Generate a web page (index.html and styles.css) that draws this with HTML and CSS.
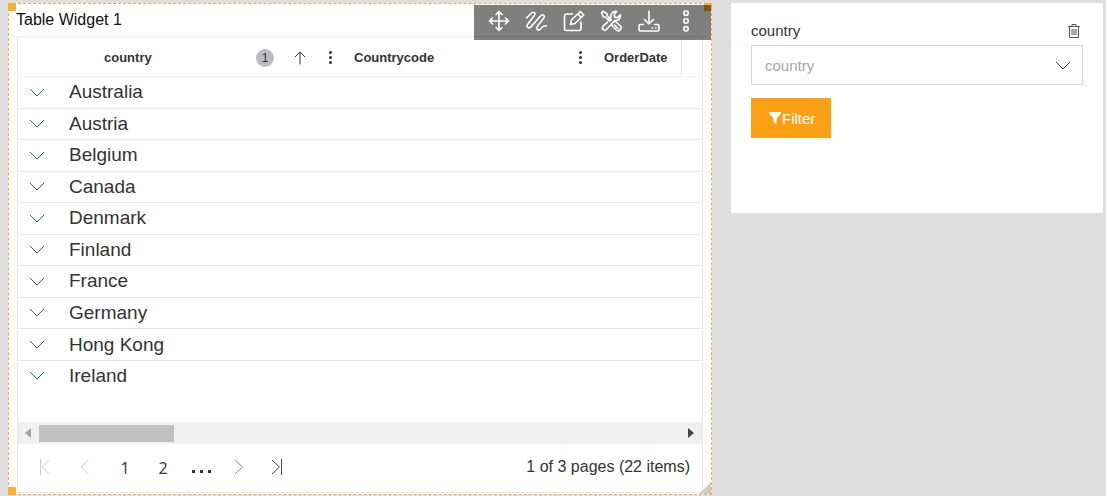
FILE: index.html
```html
<!DOCTYPE html>
<html lang="en">
<head>
<meta charset="utf-8">
<title>Table Widget 1</title>
<link rel="stylesheet" href="styles.css">
</head>
<body>
<main class="dashboard">
  <section class="widget">
    <span class="handle handle-tl"></span>
    <span class="handle handle-tr"></span>
    <span class="handle handle-bl"></span>
    <span class="resize-corner"></span>
    <h1 class="widget-title">Table Widget 1</h1>
    <div class="toolbar">
      <button class="tool" aria-label="Move"><svg viewBox="0 0 22 22"><path d="M11 1.500v19M1.500 11h19M8 4.500l3-3 3 3M8 17.500l3 3 3-3M4.500 8l-3 3 3 3M17.500 8l3 3-3 3"/></svg></button>
      <button class="tool" aria-label="Theme"><svg viewBox="0 0 22 22"><path d="M1.500 8 6.500 3c2-1.800 4.500.2 2.800 2.500l-6.800 9c-1.500 2.400 1.200 4.500 3.200 2.600L16 5.500c2-1.800 4.300.3 2.800 2.400l-6.600 8.600c-1.500 2.200.5 4.500 2.800 3l2.500-2.500c1.200-1.300 2.500-1.500 4-1"/></svg></button>
      <button class="tool" aria-label="Edit"><svg viewBox="0 0 22 22"><path d="M9.500 4H3.500a2 2 0 0 0-2 2v12.500a2 2 0 0 0 2 2H16a2 2 0 0 0 2-2V12M7.500 14.500l1-4.500 8.800-8.500 3.500 3.500-8.800 8.500zM14.800 4l3.500 3.500"/></svg></button>
      <button class="tool" aria-label="Settings"><svg viewBox="0 0 22 22"><path d="M1.500 2.800 3 1.300l3.800 2.200.5 2.200 4 4-1.600 1.600-4-4-2.200-.5zM12 13.500l2-2c1.500.2 2.300.5 3 1.200l3.300 3.300c2.400 2.600-1.400 6.300-4 4l-3.300-3.300c-.9-.9-1.200-2-1-3.200zM14.500 15l3.500 3.500M9 9l2-2c-.6-3 1.800-6.300 5.800-5.500l-2.600 2.800.5 2.800 2.800.5 2.800-2.800c.7 4-2.500 6.500-5.600 5.700l-8.200 9c-2.300 2.100-5.400-.9-3.400-3.300l4.400-4"/></svg></button>
      <button class="tool" aria-label="Export"><svg viewBox="0 0 22 22"><path d="M11 1v13M6.500 9.500 11 14l4.500-4.500M5.500 14.500H2.500q-1.500 0-1.500 1.500v3.500q0 1.500 1.500 1.500h17q1.500 0 1.500-1.500V16q0-1.500-1.500-1.500h-3M14 18h.5M17.500 18h.5"/></svg></button>
      <button class="tool" aria-label="More"><svg viewBox="0 0 22 22"><circle cx="11" cy="3.200" r="2.200"/><circle cx="11" cy="11" r="2.200"/><circle cx="11" cy="18.800" r="2.200"/></svg></button>
    </div>
    <div class="grid">
      <div class="grid-content">
        <table class="data">
          <colgroup><col class="col-expand"><col class="col-wide"><col class="col-wide"><col class="col-date"><col></colgroup>
          <thead>
            <tr>
              <th></th>
              <th><div class="head"><span class="head-text">country</span><span class="badge">1</span>
                <svg class="sort" viewBox="0 0 12 14"><path d="M6 13.500V1M1 6l5-5 5 5"/></svg>
                <button class="dots" aria-label="country column menu"><i></i><i></i><i></i></button></div></th>
              <th><div class="head"><span class="head-text">Countrycode</span>
                <button class="dots" aria-label="Countrycode column menu"><i></i><i></i><i></i></button></div></th>
              <th class="date"><div class="head"><span class="head-text">OrderDate</span></div></th>
              <th></th>
            </tr>
          </thead>
          <tbody>
            <tr><td colspan="5"><button class="group"><svg viewBox="0 0 16 9"><path d="M1 1l7 7 7-7"/></svg>Australia</button></td></tr>
            <tr><td colspan="5"><button class="group"><svg viewBox="0 0 16 9"><path d="M1 1l7 7 7-7"/></svg>Austria</button></td></tr>
            <tr><td colspan="5"><button class="group"><svg viewBox="0 0 16 9"><path d="M1 1l7 7 7-7"/></svg>Belgium</button></td></tr>
            <tr><td colspan="5"><button class="group warm"><svg viewBox="0 0 16 9"><path d="M1 1l7 7 7-7"/></svg>Canada</button></td></tr>
            <tr><td colspan="5"><button class="group"><svg viewBox="0 0 16 9"><path d="M1 1l7 7 7-7"/></svg>Denmark</button></td></tr>
            <tr><td colspan="5"><button class="group warm"><svg viewBox="0 0 16 9"><path d="M1 1l7 7 7-7"/></svg>Finland</button></td></tr>
            <tr><td colspan="5"><button class="group warm"><svg viewBox="0 0 16 9"><path d="M1 1l7 7 7-7"/></svg>France</button></td></tr>
            <tr><td colspan="5"><button class="group"><svg viewBox="0 0 16 9"><path d="M1 1l7 7 7-7"/></svg>Germany</button></td></tr>
            <tr><td colspan="5"><button class="group warm"><svg viewBox="0 0 16 9"><path d="M1 1l7 7 7-7"/></svg>Hong Kong</button></td></tr>
            <tr><td colspan="5"><button class="group"><svg viewBox="0 0 16 9"><path d="M1 1l7 7 7-7"/></svg>Ireland</button></td></tr>
          </tbody>
        </table>
      </div>
      <div class="scrollbar">
        <svg class="arrow arrow-off" viewBox="0 0 6 10"><path d="M6 0v10L0 5z"/></svg>
        <div class="track"><div class="thumb"></div></div>
        <svg class="arrow" viewBox="0 0 6 10"><path d="M0 0v10l6-5z"/></svg>
      </div>
      <nav class="pager">
        <button class="page faint" aria-label="First page" disabled><svg viewBox="0 0 12 16"><path d="M1.500 0v16M10.500 1 3 8l7.500 7"/></svg></button>
        <button class="page faint" aria-label="Previous page" disabled><svg viewBox="0 0 12 16"><path d="M9.500 1 2 8l7.500 7"/></svg></button>
        <button class="page number">1</button>
        <button class="page number">2</button>
        <button class="page more" aria-label="More pages"><i></i><i></i><i></i></button>
        <button class="page next" aria-label="Next page"><svg viewBox="0 0 12 16"><path d="M2 1l7.500 7L2 15"/></svg></button>
        <button class="page last" aria-label="Last page"><svg viewBox="0 0 12 16"><path d="M1 1l7.500 7L1 15M10.500 0v16"/></svg></button>
        <span class="pager-info">1 of 3 pages (22 items)</span>
      </nav>
    </div>
  </section>

  <section class="filter-card">
    <div class="filter-head">
      <label for="country">country</label>
      <button class="trash" aria-label="Clear"><svg viewBox="0 0 12 14"><path d="M0 2.500h12M4 2.500v-2h4v2M1.500 2.500v11h9v-11M4 5v6M6 5v6M8 5v6"/></svg></button>
    </div>
    <div class="select-box">
      <select id="country"><option>country</option></select>
      <svg class="caret" viewBox="0 0 16 9"><path d="M1 1l7 7 7-7"/></svg>
    </div>
    <button class="filter-btn"><svg viewBox="0 0 12 12"><path d="M0 0h12v1.500L7.500 6.500V12L4.500 10V6.500L0 1.500z"/></svg>Filter</button>
  </section>
</main>
</body>
</html>
```
FILE: styles.css
```css
* { box-sizing: border-box; }

body {
  margin: 0;
  background: #dedede;
  color: #333;
  font-family: "Liberation Sans", Arial, sans-serif;
  font-size: 16px;
}

button {
  margin: 0;
  padding: 0;
  border: 0;
  background: none;
  color: inherit;
  font: inherit;
}

svg {
  flex: none;
  fill: none;
  stroke: currentColor;
}

.dashboard {
  display: grid;
  grid-template-columns: 704fr 372fr;
  align-items: start;
  gap: 19px;
  padding: 3px 3px 0 8px;
}

/* Table widget */
.widget {
  position: relative;
  padding: 0 8px 1px 7px;
  border: 1px dashed #faa935;
  background: #fff;
}

.handle {
  position: absolute;
  width: 8px;
  height: 8px;
  background: #fdac38;
}

.handle-tl { top: -1px; left: -1px; }
.handle-tr { top: -1px; right: -1px; }
.handle-bl { bottom: -1px; left: -1px; }

.resize-corner {
  position: absolute;
  right: 0;
  bottom: 0;
  border-bottom: 12px solid #ccc;
  border-left: 12px solid transparent;
}

.widget-title {
  margin: 0;
  color: #111;
  font-size: 16px;
  font-weight: 400;
  line-height: 32px;
}

.toolbar {
  position: absolute;
  top: 1px;
  right: 0;
  display: flex;
  width: 237px;
  height: 35px;
  padding: 0 6px 4px;
  background: rgba(0, 0, 0, 0.5);
  color: #fff;
}

.tool {
  display: flex;
  flex: 1;
  align-items: center;
  justify-content: center;
}

.tool svg {
  width: 22px;
  height: 22px;
  stroke-width: 1.6;
  stroke-linejoin: round;
  stroke-linecap: round;
}

.grid {
  margin-left: 1px;
  border: 1px solid #e9e9e9;
}

.grid-content { padding-bottom: 31px; }

.data {
  width: 100%;
  height: 354px;
  border-collapse: separate;
  border-spacing: 0;
  table-layout: fixed;
}

.col-expand { width: 73px; }
.col-wide { width: 250px; }
.col-date { width: 91px; }

.data th {
  height: 40px;
  padding: 2px 0 0;
  border-bottom: 1px solid #f3f3f3;
  text-align: left;
}

.data .date { border-right: 1px solid #e9e9e9; }

.head {
  display: flex;
  align-items: center;
  padding: 0 7px 0 13px;
  font-size: 13px;
}

.head-text { flex: 1; }

.badge {
  width: 18px;
  height: 18px;
  margin-right: 20px;
  border-radius: 50%;
  background: #bcbdc1;
  font-size: 12px;
  font-weight: 400;
  line-height: 18px;
  text-align: center;
}

.sort {
  width: 12px;
  height: 14px;
  margin-right: 23px;
}

.dots {
  display: flex;
  flex-direction: column;
  gap: 2px;
  width: 5px;
}

.dots i {
  width: 3px;
  height: 3px;
  border-radius: 50%;
  background: #333;
}

.data td {
  padding: 0;
  border-bottom: 1px solid #e6e6e6;
}

.data tr:last-child td { border-bottom: 0; }

.group {
  display: flex;
  align-items: center;
  gap: 24px;
  width: 100%;
  padding-left: 11px;
  font-size: 19px;
  line-height: 22px;
}

.group svg {
  width: 16px;
  height: 9px;
  color: #2b6c90;
}

.warm svg { color: #7c4a35; }

.scrollbar {
  display: flex;
  align-items: center;
  gap: 8px;
  height: 22px;
  padding: 0 8px 0 7px;
  background: #f0f0f0;
}

.arrow {
  width: 6px;
  height: 10px;
  fill: #444;
  stroke: none;
}

.arrow-off { fill: #a3a3a3; }

.track { flex: 1; }

.thumb {
  width: 21%;
  height: 17px;
  background: #c1c1c1;
}

.pager {
  display: flex;
  align-items: center;
  height: 48px;
  padding: 0 12px 3px 8px;
}

.page {
  display: flex;
  align-items: center;
  justify-content: center;
  width: 38px;
  height: 36px;
  font-family: "Open Sans", sans-serif;
}

.page svg {
  width: 12px;
  height: 16px;
}

.number { padding-top: 2px; }

.faint { color: #ccc; }
.next { color: #888; }
.last { color: #444; }

.faint + .faint { width: 42px; }

.more {
  gap: 5px;
  padding-top: 9px;
}

.more i {
  width: 3px;
  height: 3px;
  background: #333;
}

.pager-info { margin-left: auto; }

/* Filter card */
.filter-card {
  min-height: 210px;
  padding: 18px 20px;
  background: #fff;
  font-size: 15px;
}

.filter-head {
  display: flex;
  align-items: center;
  justify-content: space-between;
  padding-right: 3px;
  line-height: 20px;
}

.trash {
  display: flex;
  color: #555;
}

.trash svg {
  width: 12px;
  height: 14px;
}

.select-box {
  display: grid;
  align-items: center;
  margin: 4px 0 13px;
}

.select-box > * { grid-area: 1 / 1; }

.select-box select {
  width: 100%;
  height: 40px;
  padding: 0 13px;
  appearance: none;
  border: 1px solid #d3d7e2;
  border-radius: 0;
  background: #fff;
  color: #a6a6a6;
  font: inherit;
}

.caret {
  justify-self: end;
  width: 16px;
  height: 9px;
  margin-right: 12px;
  color: #444;
  pointer-events: none;
}

.filter-btn {
  display: flex;
  align-items: center;
  gap: 1px;
  height: 40px;
  padding: 0 16px 0 18px;
  background: #fb9f14;
  color: #fff;
}

.filter-btn svg {
  width: 12px;
  height: 12px;
  fill: currentColor;
  stroke: none;
}
```
